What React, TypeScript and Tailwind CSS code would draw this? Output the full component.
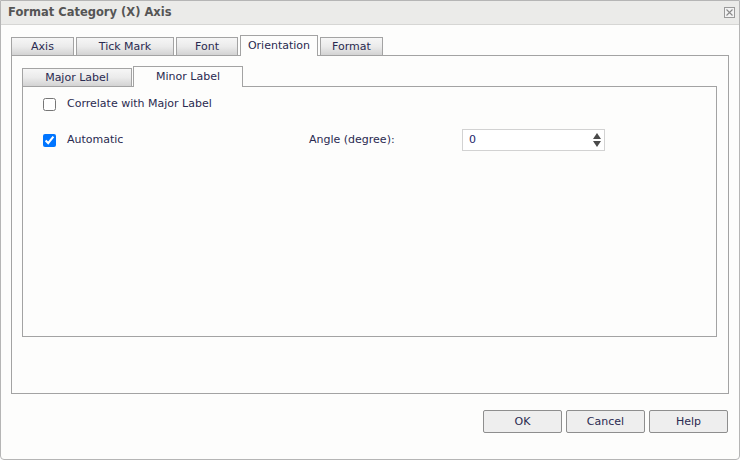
import React from 'react';

type Tab = { label: string; w: string; active?: boolean };

const outerTabs: Tab[] = [
  { label: 'Axis', w: 'w-[63px]' },
  { label: 'Tick Mark', w: 'w-[98px]' },
  { label: 'Font', w: 'w-[62px]' },
  { label: 'Orientation', w: 'w-[78px]', active: true },
  { label: 'Format', w: 'w-[63px]' },
];

const innerTabs: Tab[] = [
  { label: 'Major Label', w: 'w-[110px]' },
  { label: 'Minor Label', w: 'w-[110px]', active: true },
];

function TabButton({ tab }: { tab: Tab }) {
  if (tab.active) {
    return (
      <div
        className={`${tab.w} relative z-10 -mb-px flex h-[21px] items-center justify-center border border-b-0 border-[#a3a3a3] bg-[#fdfdfc] text-[#2a2a50]`}
      >
        {tab.label}
      </div>
    );
  }
  return (
    <div
      className={`${tab.w} flex h-[18px] items-center justify-center border border-b-0 border-[#a3a3a3] bg-linear-to-b from-[#f6f6f6] via-[#ebebeb] to-[#d3d3d3] pt-px text-[#2a2a50]`}
    >
      {tab.label}
    </div>
  );
}

function Spinner() {
  return (
    <div className="flex h-[22px] w-[143px] items-center justify-between border border-[#d2d2d2] bg-white pl-[6px] pr-[2px]">
      <span className="text-[#24246a]">0</span>
      <svg width="10" height="16" viewBox="0 0 10 16">
        <polygon points="5,1 9,7 1,7" fill="#4a4a4a" />
        <polygon points="1,9 9,9 5,15" fill="#4a4a4a" />
      </svg>
    </div>
  );
}

export default function App() {
  return (
    <div
      className="flex h-[460px] w-[740px] flex-col overflow-hidden rounded-b-[4px] border border-[#b5b5b5] bg-[#fdfdfc] text-[11px] text-[#2a2a50]"
      style={{ fontFamily: '"DejaVu Sans", Tahoma, sans-serif' }}
    >
      {/* title bar */}
      <div className="flex h-[24px] shrink-0 items-center justify-between border-b border-[#d6d6d4] bg-[#ebebe9] pl-[7px] pr-[4px]">
        <span className="text-[11.5px] font-bold text-[#555555]">Format Category (X) Axis</span>
        <div className="flex h-[11px] w-[11px] items-center justify-center border border-[#9a9a9a] bg-[#f3f3f3]">
          <svg width="7" height="7" viewBox="0 0 7 7">
            <path d="M0.5 0.5 L6.5 6.5 M6.5 0.5 L0.5 6.5" stroke="#8a8a8a" strokeWidth="1.1" />
          </svg>
        </div>
      </div>

      <div className="flex flex-col pl-[10px] pr-[10px] pt-[10px]">
        {/* outer tabs */}
        <div className="flex h-[20px] items-end gap-[2px]">
          {outerTabs.map((t) => (
            <TabButton key={t.label} tab={t} />
          ))}
        </div>

        {/* outer panel */}
        <div className="flex h-[339px] flex-col border border-[#a3a3a3] pl-[10px] pr-[11px] pt-[10px]">
          <div className="flex h-[20px] items-end gap-px">
            {innerTabs.map((t) => (
              <TabButton key={t.label} tab={t} />
            ))}
          </div>
          <div className="flex h-[251px] flex-col border border-[#a3a3a3] pl-[20px] pt-[10px]">
            <label className="flex h-[14px] items-center gap-[11px]">
              <input type="checkbox" className="m-0 h-[13px] w-[13px]" readOnly />
              <span>Correlate with Major Label</span>
            </label>
            <div className="mt-[18px] flex h-[22px] items-center">
              <label className="flex w-[266px] items-center gap-[11px]">
                <input type="checkbox" className="m-0 h-[13px] w-[13px]" checked readOnly />
                <span>Automatic</span>
              </label>
              <span className="w-[153px]">Angle (degree):</span>
              <Spinner />
            </div>
          </div>
        </div>

        {/* buttons */}
        <div className="mt-[16px] flex justify-end gap-[4px] pr-px">
          {['OK', 'Cancel', 'Help'].map((b) => (
            <button
              key={b}
              className="h-[23px] w-[79px] rounded-[2px] border border-[#8e8e8e] bg-[#eeeeee] pt-px text-[11px] text-[#2a2a50]"
            >
              {b}
            </button>
          ))}
        </div>
      </div>
    </div>
  );
}
